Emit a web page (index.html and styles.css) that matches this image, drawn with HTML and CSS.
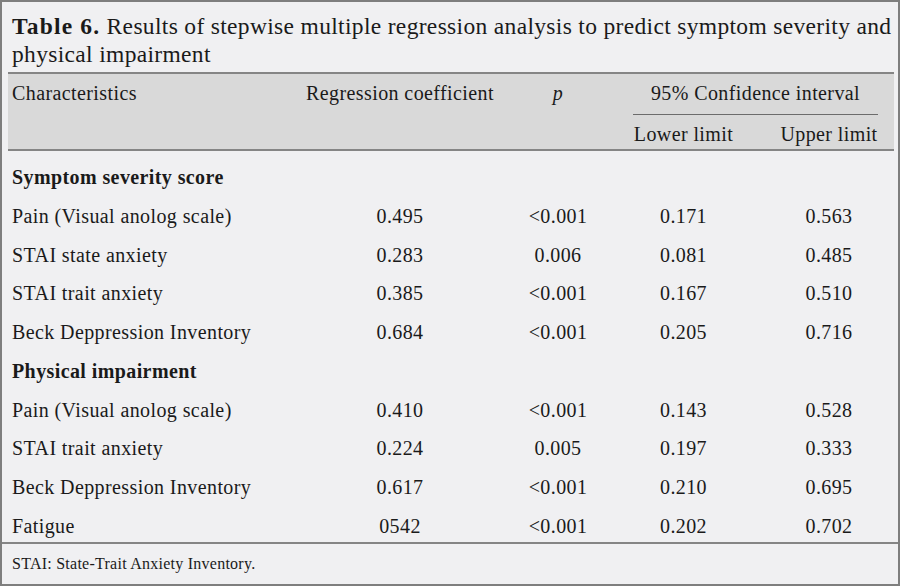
FILE: index.html
```html
<!DOCTYPE html>
<html>
<head>
<meta charset="utf-8">
<link rel="stylesheet" href="styles.css">
</head>
<body>
<div class="frame">
  <div class="caption"><b>Table 6.</b> Results of stepwise multiple regression analysis to predict symptom severity and<br>physical impairment</div>
  <div class="table">
    <div class="head">
      <div class="h c1">Characteristics</div>
      <div class="h c2">Regression coefficient</div>
      <div class="h c3"><i>p</i></div>
      <div class="h ci"><span class="ci-label">95% Confidence interval</span></div>
      <div class="h c4 sub">Lower limit</div>
      <div class="h c5 sub">Upper limit</div>
    </div>
    <div class="body">
      <div class="row section"><div class="c1">Symptom severity score</div></div>
      <div class="row"><div class="c1">Pain (Visual anolog scale)</div><div class="c2">0.495</div><div class="c3">&lt;0.001</div><div class="c4">0.171</div><div class="c5">0.563</div></div>
      <div class="row"><div class="c1">STAI state anxiety</div><div class="c2">0.283</div><div class="c3">0.006</div><div class="c4">0.081</div><div class="c5">0.485</div></div>
      <div class="row"><div class="c1">STAI trait anxiety</div><div class="c2">0.385</div><div class="c3">&lt;0.001</div><div class="c4">0.167</div><div class="c5">0.510</div></div>
      <div class="row"><div class="c1">Beck Deppression Inventory</div><div class="c2">0.684</div><div class="c3">&lt;0.001</div><div class="c4">0.205</div><div class="c5">0.716</div></div>
      <div class="row section"><div class="c1">Physical impairment</div></div>
      <div class="row"><div class="c1">Pain (Visual anolog scale)</div><div class="c2">0.410</div><div class="c3">&lt;0.001</div><div class="c4">0.143</div><div class="c5">0.528</div></div>
      <div class="row"><div class="c1">STAI trait anxiety</div><div class="c2">0.224</div><div class="c3">0.005</div><div class="c4">0.197</div><div class="c5">0.333</div></div>
      <div class="row"><div class="c1">Beck Deppression Inventory</div><div class="c2">0.617</div><div class="c3">&lt;0.001</div><div class="c4">0.210</div><div class="c5">0.695</div></div>
      <div class="row"><div class="c1">Fatigue</div><div class="c2">0542</div><div class="c3">&lt;0.001</div><div class="c4">0.202</div><div class="c5">0.702</div></div>
    </div>
  </div>
  <div class="footer">STAI: State-Trait Anxiety Inventory.</div>
</div>
</body>
</html>
```

FILE: styles.css
```css
* { box-sizing: border-box; }
html, body { margin: 0; padding: 0; background: #f0f0f2; }
body {
  font-family: "Liberation Serif", "Times New Roman", serif;
  color: #1a1a1a;
}
.frame {
  width: 900px;
  height: 586px;
  border: 2px solid #7e7e7e;
  background: #f0f0f2;
  display: flex;
  flex-direction: column;
}
.caption {
  font-size: 23.5px;
  letter-spacing: 0.33px;
  line-height: 28px;
  padding: 10.4px 2px 4px 10px;
}
.caption b { font-weight: bold; letter-spacing: 1.2px; }
.table {
  margin: 0 4px 0 6px;
  border-top: 2px solid #858585;
  font-size: 20px;
  letter-spacing: 0.4px;
  flex: 1;
  display: flex;
  flex-direction: column;
}
.head {
  display: grid;
  grid-template-columns: 297px 190px 126px 125px 148px;
  grid-template-rows: 41px 34px;
  background: #d9d9d9;
  border-bottom: 2px solid #858585;
}
.head .h { line-height: 39px; }
.head .c1, .head .c2, .head .c3 { grid-row: 1 / span 2; }
.ci {
  grid-column: 4 / span 2;
  grid-row: 1;
  padding: 0 16px 0 12px;
}
.ci-label {
  display: block;
  text-align: center;
  border-bottom: 1px solid #6c6c6c;
  height: 41px;
}
.head .sub { grid-row: 2; line-height: 38px; }
.head .c4 { grid-column: 4; }
.head .c5 { grid-column: 5; }
.c1 { padding-left: 4px; text-align: left; white-space: nowrap; }
.c2, .c3, .c4 { text-align: center; }
.c5 { text-align: center; padding-left: 18px; }
.body { padding-top: 4px; }
.row {
  display: grid;
  grid-template-columns: 297px 190px 126px 125px 148px;
  height: 38.7px;
  line-height: 44px;
}
.section .c1 { font-weight: bold; }
.footer {
  border-top: 2px solid #858585;
  height: 42px;
  flex: none;
  font-size: 16px;
  letter-spacing: 0.25px;
  line-height: 40px;
  padding-left: 10px;
}
```
